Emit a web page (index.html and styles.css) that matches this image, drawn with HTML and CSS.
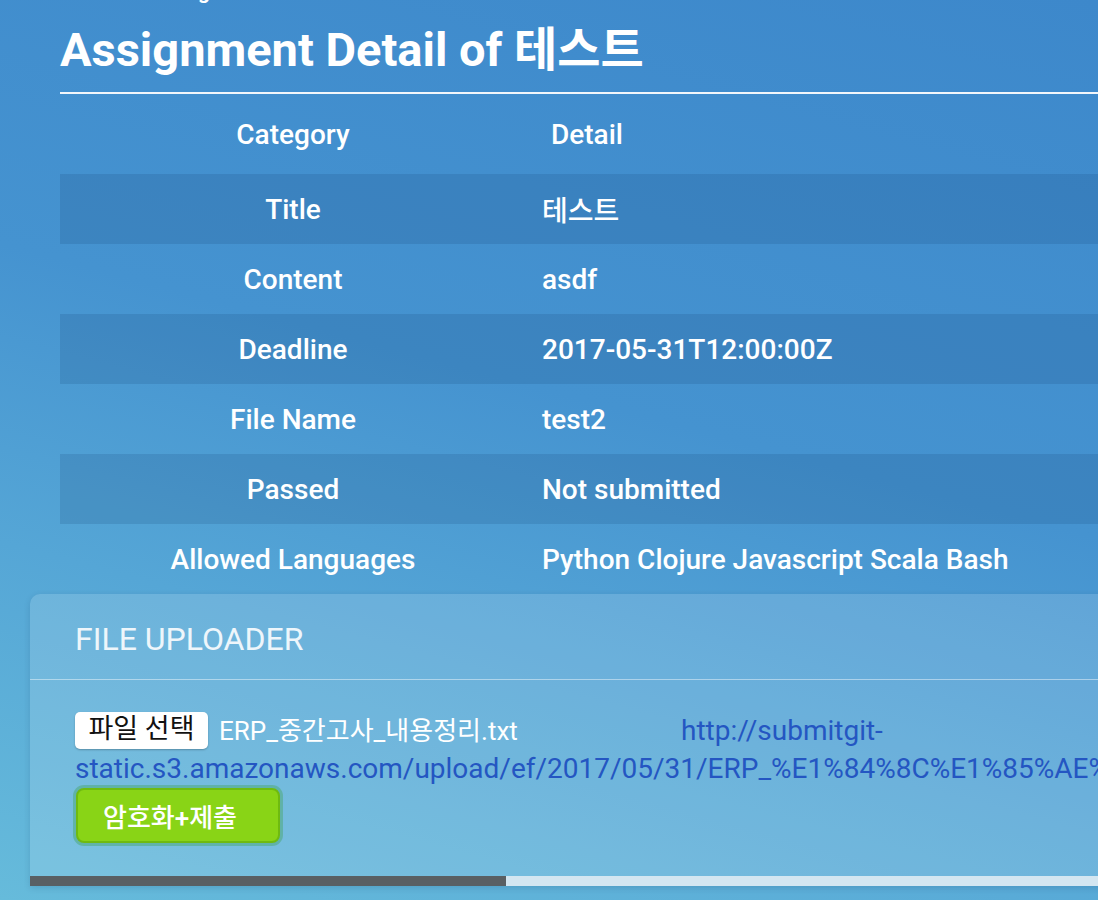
FILE: index.html
```html
<!DOCTYPE html>
<html lang="ko">
<head>
<meta charset="utf-8">
<title>Assignment Detail</title>
<link rel="stylesheet" href="styles.css">
</head>
<body>
<div class="page">
  <div class="crumb">Assignment</div>
  <h1 class="title">Assignment Detail of 테스트</h1>
  <table class="detail">
    <thead>
      <tr><th class="cat">Category</th><th class="val">Detail</th></tr>
    </thead>
    <tbody>
      <tr class="odd"><td class="cat">Title</td><td class="val">테스트</td></tr>
      <tr><td class="cat">Content</td><td class="val">asdf</td></tr>
      <tr class="odd"><td class="cat">Deadline</td><td class="val">2017-05-31T12:00:00Z</td></tr>
      <tr><td class="cat">File Name</td><td class="val">test2</td></tr>
      <tr class="odd"><td class="cat">Passed</td><td class="val">Not submitted</td></tr>
      <tr><td class="cat">Allowed Languages</td><td class="val">Python Clojure Javascript Scala Bash</td></tr>
    </tbody>
  </table>
  <section class="uploader">
    <div class="uploader-head">FILE UPLOADER</div>
    <div class="uploader-body">
      <div class="line"><span class="file-input"><span class="file-btn">파일 선택</span><span class="file-name">ERP_중간고사_내용정리.txt</span></span><a class="file-link" href="#">http://submitgit-static.s3.amazonaws.com/upload/ef/2017/05/31/ERP_%E1%84%8C%E1%85%AE%E1%86%BC%E1%84%80%E1%85%A1%E1%86%AB</a></div>
      <button class="submit">암호화+제출</button>
    </div>
    <div class="progress"><div class="progress-fill" style="width:476px"></div></div>
  </section>
</div>
</body>
</html>
```
FILE: styles.css
```css
html, body {
  margin: 0;
  padding: 0;
  overflow: hidden;
}
body {
  width: 1098px;
  height: 900px;
  font-family: Roboto, "Noto Sans CJK KR", sans-serif;
  color: #fff;
  background: linear-gradient(15deg, #66bbdb 0%, #55a6d6 30%, #4593d0 55%, #3d88cb 100%);
}
.page {
  padding-left: 60px;
  width: 1200px;
}
.crumb {
  font-size: 22px;
  line-height: 26px;
  margin-top: -22px;
  padding-left: 95px;
  font-weight: 500;
}
.title {
  margin: 0;
  font-size: 47px;
  font-weight: 700;
  line-height: 52px;
  padding-top: 20px;
  padding-bottom: 16px;
  border-bottom: 2px solid #f2f6fb;
}
.detail {
  border-collapse: collapse;
  width: 1140px;
  font-size: 28px;
}
.detail th, .detail td {
  padding: 0;
  font-weight: 500;
}
.detail thead tr {
  height: 80px;
}
.detail tbody tr {
  height: 70px;
}
.detail tr.odd {
  background: rgba(20, 60, 110, 0.16);
}
.detail .cat {
  width: 466px;
  text-align: center;
}
.detail .val {
  text-align: left;
  padding-left: 16px;
}
.detail th.val {
  padding-left: 25px;
}
.uploader {
  margin-left: -30px;
  width: 1200px;
  background: rgba(255, 255, 255, 0.14);
  border-radius: 10px 10px 0 0;
  box-shadow: 0 2px 6px rgba(0, 40, 80, 0.15);
}
.uploader-head {
  height: 85px;
  line-height: 91px;
  padding-left: 45px;
  font-size: 32px;
  color: #eef6fb;
  border-bottom: 1px solid rgba(255, 255, 255, 0.45);
}
.uploader-body {
  padding: 32px 0 33px 45px;
}
.line {
  font-size: 28px;
  line-height: 38px;
  width: 1100px;
}
.file-input {
  display: inline-block;
  width: 606px;
  vertical-align: top;
}
.file-btn {
  display: inline-block;
  width: 133px;
  height: 37px;
  box-sizing: border-box;
  background: #fff;
  color: #111;
  border-radius: 5px;
  box-shadow: 0 1px 2px rgba(0, 0, 0, 0.25);
  font-size: 27px;
  line-height: 35px;
  text-align: center;
  vertical-align: top;
}
.file-name {
  margin-left: 11px;
  font-size: 26px;
}
.file-link {
  color: #2456c2;
  text-decoration: none;
}
.submit {
  display: block;
  margin-top: 0;
  margin-left: 1px;
  width: 204px;
  height: 55px;
  background: #89d416;
  border: 2px solid #6fba10;
  border-radius: 8px;
  box-shadow: 0 0 0 3px rgba(90, 175, 150, 0.75);
  color: #fff;
  font-family: Roboto, "Noto Sans CJK KR", sans-serif;
  font-size: 26px;
  font-weight: 500;
  padding: 0 16px 0 0;
}
.progress {
  height: 10px;
  background: #d3e6f1;
}
.progress-fill {
  height: 10px;
  background: #595f63;
}
```
